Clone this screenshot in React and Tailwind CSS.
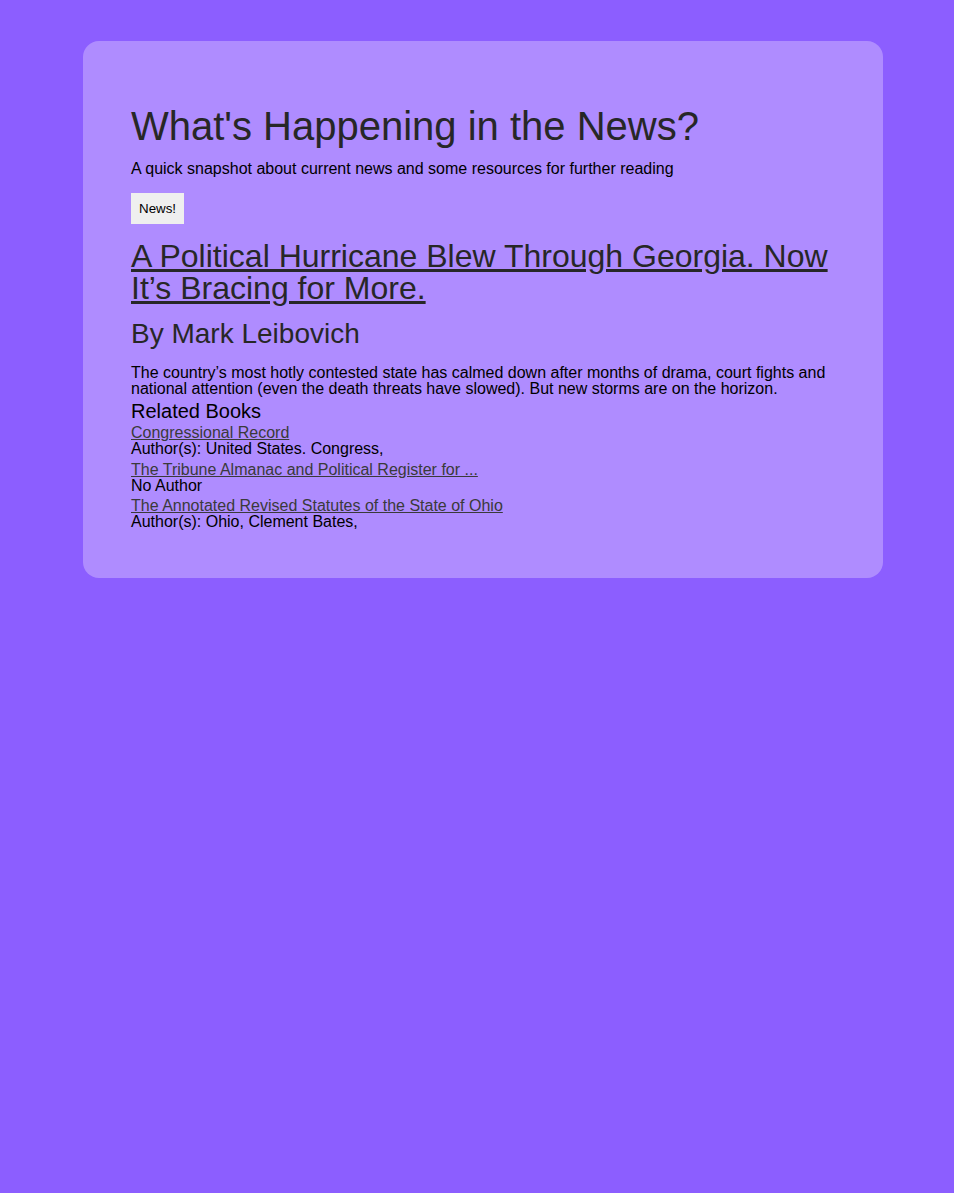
export default function App() {
  const books = [
    { title: "Congressional Record", author: "Author(s): United States. Congress," },
    { title: "The Tribune Almanac and Political Register for ...", author: "No Author" },
    { title: "The Annotated Revised Statutes of the State of Ohio", author: "Author(s): Ohio, Clement Bates," },
  ];
  return (
    <div className="min-h-[1193px] bg-[#8c5eff] pt-[41px] font-['Liberation_Sans',Arial,sans-serif]">
      <div className="ml-[83px] w-[800px] rounded-2xl bg-[#af8cff] px-12 pt-[65px] pb-[48px]">
        <h1 className="text-[40px] leading-none text-[#272727]">What's Happening in the News?</h1>
        <p className="mt-[15px] text-[16px] leading-none text-black">
          A quick snapshot about current news and some resources for further reading
        </p>
        <button className="mt-4 block bg-[#efefef] px-2 py-2 text-[13.33px] leading-[15px] text-black">
          News!
        </button>
        <a href="#" className="mt-4 block text-[32px] leading-none text-[#272727] underline">
          A Political Hurricane Blew Through Georgia. Now It’s Bracing for More.
        </a>
        <h2 className="mt-4 text-[28px] leading-none text-[#272727]">By Mark Leibovich</h2>
        <p className="mt-[17px] text-[16px] leading-[15.5px] text-black">
          The country’s most hotly contested state has calmed down after months of drama, court fights and
          national attention (even the death threats have slowed). But new storms are on the horizon.
        </p>
        <h3 className="mt-[4.5px] text-[20px] leading-none text-black">Related Books</h3>
        {books.map((b) => (
          <div key={b.title} className="mt-[4.5px] text-[16px] leading-none">
            <a href="#" className="block text-[#3a3a3a] underline">{b.title}</a>
            <div className="text-black">{b.author}</div>
          </div>
        ))}
      </div>
    </div>
  );
}
